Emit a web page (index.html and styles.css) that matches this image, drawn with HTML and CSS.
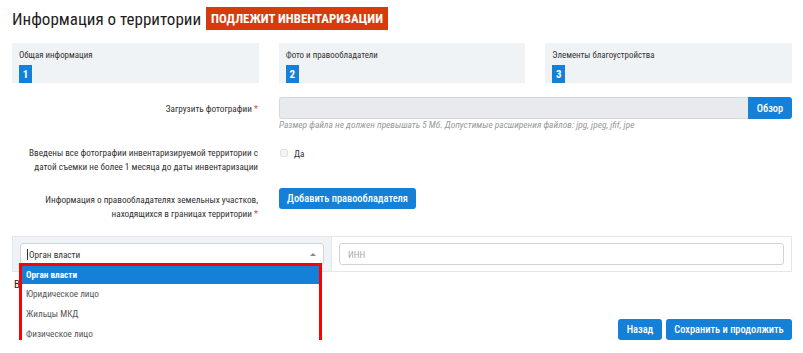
FILE: index.html
```html
<!DOCTYPE html>
<html lang="ru">
<head>
<meta charset="utf-8">
<title>Информация о территории</title>
<link rel="stylesheet" href="styles.css">
</head>
<body>
<div class="page">
  <div class="header">
    <h1 class="title">Информация о территории</h1>
    <span class="badge">ПОДЛЕЖИТ ИНВЕНТАРИЗАЦИИ</span>
  </div>

  <div class="steps">
    <div class="step"><div class="step-label">Общая информация</div><div class="step-num">1</div></div>
    <div class="step"><div class="step-label">Фото и правообладатели</div><div class="step-num">2</div></div>
    <div class="step"><div class="step-label">Элементы благоустройства</div><div class="step-num">3</div></div>
  </div>

  <div class="form-row row-upload">
    <div class="label">Загрузить фотографии <span class="req">*</span></div>
    <div class="control">
      <div class="file">
        <div class="file-field"></div>
        <button class="btn btn-browse">Обзор</button>
      </div>
      <div class="hint">Размер файла не должен превышать 5 Мб. Допустимые расширения файлов: jpg, jpeg, jfif, jpe</div>
    </div>
  </div>

  <div class="form-row row-check">
    <div class="label">Введены все фотографии инвентаризируемой территории с<br>датой съемки не более 1 месяца до даты инвентаризации</div>
    <div class="control">
      <label class="check"><span class="box"></span><span>Да</span></label>
    </div>
  </div>

  <div class="form-row row-owner">
    <div class="label">Информация о правообладателях земельных участков,<br>находящихся в границах территории <span class="req">*</span></div>
    <div class="control">
      <button class="btn btn-add">Добавить правообладателя</button>
    </div>
  </div>

  <div class="owners">
    <div class="owner-table">
      <div class="cell cell-type">
        <div class="select"><span class="caret-text">Орган власти</span><span class="caret"></span></div>
      </div>
      <div class="cell cell-inn">
        <div class="input">ИНН</div>
      </div>
    </div>
    <div class="under">В</div>
    <ul class="dropdown">
      <li class="opt active">Орган власти</li>
      <li class="opt">Юридическое лицо</li>
      <li class="opt">Жильцы МКД</li>
      <li class="opt">Физическое лицо</li>
    </ul>
  </div>

  <div class="actions">
    <button class="btn btn-back">Назад</button>
    <button class="btn btn-save">Сохранить и продолжить</button>
  </div>
</div>
</body>
</html>
```

FILE: styles.css
```css
* { box-sizing: border-box; }
html, body { margin: 0; padding: 0; background: #fff; }
body {
  font-family: "Roboto Condensed", Roboto, "Noto Sans", sans-serif;
  color: #333;
  font-size: 9.2px;
}
.page { padding: 7px 11px 0 12px; }

.header { display: flex; align-items: center; height: 23px; }
.title {
  margin: 0;
  font-weight: 400;
  font-size: 17px;
  color: #1e1e1e;
  margin-right: 5px;
}
.badge {
  background: #d73b0c;
  color: #fff;
  font-weight: 700;
  font-size: 12.9px;
  height: 23px;
  line-height: 23px;
  padding: 0 5px;
}

.steps {
  margin-top: 13px;
  display: grid;
  grid-template-columns: repeat(3, 1fr);
  column-gap: 20px;
}
.step {
  background: #f0f3f6;
  height: 40px;
  padding: 7px 7px 0;
  display: flex;
  flex-direction: column;
  justify-content: space-between;
}
.step-label { font-size: 8.9px; line-height: 10px; color: #333; }
.step-num {
  width: 13px; height: 18px;
  background: #1580d8;
  color: #fff;
  font-weight: 700;
  font-size: 11px;
  text-align: center;
  line-height: 19px;
}

.form-row {
  display: grid;
  grid-template-columns: 247px 1fr;
  column-gap: 20px;
}
.label { text-align: right; line-height: 14px; padding-right: 1px; }
.req { color: #e04a3a; }

.row-upload { margin-top: 14px; }
.row-upload .label { padding-top: 5px; }
.file { display: flex; height: 22px; }
.file-field {
  flex: 1;
  background: #e8ebee;
  border: 1px solid #d5d9de;
  border-right: 0;
  border-radius: 3px 0 0 3px;
}
.btn {
  border: 0;
  background: #1580d8;
  color: #fff;
  font-family: inherit;
  font-size: 10.4px;
  font-weight: 500;
  border-radius: 3px;
  padding: 0;
  height: 21px;
  cursor: pointer;
}
.btn-browse { height: 22px; border-radius: 0 3px 3px 0; width: 44px; }
.hint {
  font-size: 9.4px;
  line-height: 11px;
  font-style: italic;
  color: #999;
}

.row-check { margin-top: 16px; }
.check { display: flex; align-items: center; height: 14px; padding-left: 1px; }
.box {
  width: 8px; height: 8px;
  border: 1px solid #e0e3e6;
  background: #f3f4f6;
  border-radius: 2px;
  margin-right: 6px;
}

.row-owner { margin-top: 14px; }
.row-owner .label { padding-top: 5px; }
.btn-add { width: 137px; }

.owners { position: relative; margin-top: 15px; }
.owner-table {
  display: grid;
  grid-template-columns: 318px 1fr;
  border: 1px solid #e3e7eb;
  height: 36px;
}
.cell { padding: 6px 7px 0 7px; }
.cell-type { background: #f0f3f6; }
.cell-inn { padding-left: 7px; border-left: 1px solid #e3e7eb; }
.select, .input {
  height: 22px;
  border: 1px solid #cfd4d9;
  border-radius: 3px;
  background: #fff;
  display: flex;
  align-items: center;
  padding-left: 6px;
  position: relative;
}
.select .caret-text { border-left: 1px solid #333; padding-left: 1px; line-height: 11px; }
.caret {
  position: absolute;
  right: 7px; top: 9px;
  border-left: 3px solid transparent;
  border-right: 3px solid transparent;
  border-bottom: 3px solid #888;
}
.input { color: #aaa; padding-left: 8px; }
.under { margin-top: 6px; line-height: 14px; padding-left: 2px; font-size: 11px; color: #222; }

.dropdown {
  position: absolute;
  left: 7px; top: 27px;
  width: 303px;
  margin: 0;
  padding: 0;
  list-style: none;
  background: #fff;
  border: 3px solid #ff0000;
  box-shadow: inset 0 -1px 0 #c8cdd2;
}
.opt { height: 20px; line-height: 20px; padding-left: 4px; color: #555; }
.opt.active { background: #1580d8; color: #fff; font-weight: 700; height: 18px; line-height: 17px; }
.opt:last-child { height: 21px; }

.actions {
  margin-top: 27px;
  display: flex;
  justify-content: flex-end;
  gap: 4px;
}
.btn-back { width: 44px; }
.btn-save { width: 126px; }
```
